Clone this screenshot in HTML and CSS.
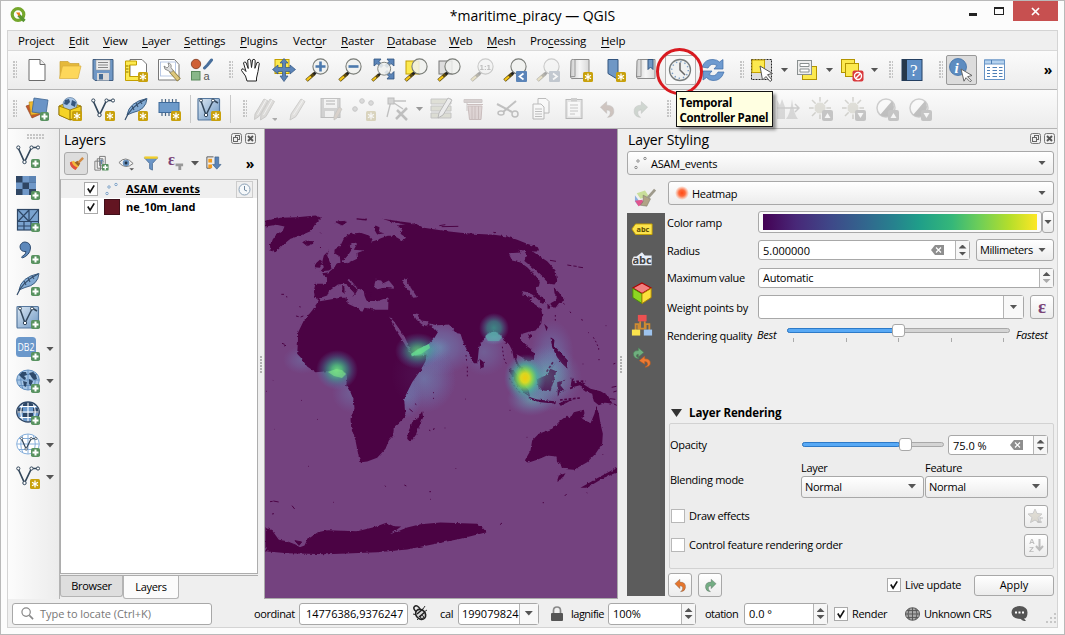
FILE: index.html
```html
<!DOCTYPE html>
<html lang="en">
<head>
<meta charset="utf-8">
<title>*maritime_piracy — QGIS</title>
<link rel="stylesheet" href="styles.css">
</head>
<body>
<svg class="defs" width="0" height="0">
<defs>
<linearGradient id="gBlue" x1="0" y1="0" x2="1" y2="1"><stop offset="0" stop-color="#dce8f3"/><stop offset="1" stop-color="#6d97c4"/></linearGradient>
<linearGradient id="gPaper" x1="0" y1="0" x2="1" y2="0"><stop offset="0" stop-color="#cfcfcf"/><stop offset=".5" stop-color="#f6f6f6"/><stop offset="1" stop-color="#d8d8d8"/></linearGradient>
<radialGradient id="gHot"><stop offset="0" stop-color="#ff4a14"/><stop offset=".45" stop-color="#ff6a3c"/><stop offset="1" stop-color="#ff8050" stop-opacity="0"/></radialGradient>
<g id="plus"><rect x="15" y="15" width="9" height="9" rx="1.8" fill="#589260"/><path d="M19.5 16.5v6M16.5 19.5h6" stroke="#fff" stroke-width="2"/></g>
<g id="star"><rect x="14" y="14" width="10" height="10" rx="1.5" fill="#c8a10c"/><path d="M19 15.5v7M16 17.2l6 3.6M16 20.8l6-3.6" stroke="#fff" stroke-width="1.3"/></g>
<g id="lens"><path d="M9.500 15.500L1.500 22.500" stroke="#5c4a10" stroke-width="3.600"/><path d="M6 18.500L1.800 22.200" stroke="#f5c518" stroke-width="2.200"/><path d="M11 14L8.500 16.500" stroke="#222" stroke-width="2.600"/><circle cx="15.500" cy="8.500" r="7.600" fill="#f0f1ee" fill-opacity=".85" stroke="#7a7d78" stroke-width="1.100"/></g>
<g id="vee"><path d="M2 3.500L8.500 18L15.500 3.500H22" fill="none" stroke="#33475b" stroke-width="1.700"/><g fill="#fff" stroke="#33475b"><circle cx="2.300" cy="3.500" r="1.600"/><circle cx="15.500" cy="3.500" r="1.600"/><circle cx="22" cy="3.500" r="1.600"/><circle cx="8.500" cy="18" r="1.700"/></g></g>
<g id="globe"><ellipse cx="12" cy="11" rx="11.300" ry="10"/><path d="M1 11h22M3 5.500h18M3 16.500h18M12 1v20M7 2Q2.500 11 7 20M17 2Q21.500 11 17 20" fill="none"/></g>

<symbol id="i-new" viewBox="0 0 24 24"><path d="M4 1.500h11l5 5v16H4z" fill="#fff" stroke="#6b6b6b"/><path d="M15 1.500v5h5" fill="#eee" stroke="#6b6b6b"/></symbol>
<symbol id="i-open" viewBox="0 0 24 24"><path d="M2 20V3.500h8l2 2h9V9" fill="#e5b93a" stroke="#c9a032" stroke-width=".7"/><path d="M1.500 20.500L4.500 8H23l-3 12.500z" fill="#fdd75a" stroke="#d8ad3c" stroke-width=".7"/></symbol>
<symbol id="i-save" viewBox="0 0 24 24"><path d="M2 1.500h20v21H4l-2-2z" fill="#6f97c5" stroke="#3f5c80"/><rect x="5" y="2" width="14" height="10" fill="#eee" stroke="#999" stroke-width=".5"/><path d="M7 4.500h10M7 7h10M7 9.500h10" stroke="#888"/><rect x="6" y="15" width="12" height="7.500" fill="#d8d8d8"/><rect x="8" y="16" width="4" height="5.500" fill="#456b95"/></symbol>
<symbol id="i-layout" viewBox="0 0 24 24"><path d="M6 1.500h12l4.500 4.500v16H6z" fill="#fff" stroke="#777"/><path d="M1.500 3h11v4h-7v11.500h13v4h-17z" fill="#fce94f" stroke="#c4a000"/><path d="M2 8h2.500M2 11h2.500M2 14h2.500" stroke="#8a7000"/><use href="#star"/></symbol>
<symbol id="i-lmgr" viewBox="0 0 24 24"><path d="M1.500 1.500h16l4.500 5v15.500H1.500z" fill="#fff" stroke="#777"/><rect x="3.500" y="4" width="15" height="14" fill="#fff" stroke="#a9bbdf" stroke-width=".8"/><path d="M14 13l8 9" stroke="#8a7a40" stroke-width="4.800"/><path d="M14 13l7.500 8.500" stroke="#dcc67c" stroke-width="3.400"/><path d="M7 8q0 4 4 4.500l3 2 2-2-2-3q1-4-3-4.500l1 3-2 2z" fill="#ddd" stroke="#777" stroke-width=".8"/></symbol>
<symbol id="i-style" viewBox="0 0 24 24"><circle cx="6" cy="6" r="4.700" fill="#cf6035" stroke="#7e3a1f" stroke-width=".8"/><rect x="1.500" y="13.500" width="8.500" height="8.500" fill="#89b789" stroke="#5a8a5c"/><path d="M14.500 10l3-3 4-5" stroke="#486f9c" stroke-width="3" stroke-linecap="round"/><text x="13.500" y="22" class="glyph-a">a</text></symbol>
<symbol id="i-hand" viewBox="0 0 24 24"><path d="M8 23l-1.500-5L2.500 12.500q0-2.500 2-1.500L7 13.500 4.500 5q.8-2 2.500-.5l2.200 6L8.700 2q1.500-1.800 3 0l.8 7.500L13.600 1.800q1.500-1.300 2.600.5l-.3 8L18 4.500q1.800-.8 2.300 1L19 13.500 17.500 20v3z" fill="#fff" stroke="#222"/></symbol>
<symbol id="i-pan" viewBox="0 0 24 24"><rect x="3" y="1.500" width="14" height="14" fill="#fce94f" stroke="#c4a000"/><path d="M12 .5l4 4.500h-2.500v4.500H18V7l5.500 4.500L18 16v-2.500h-4.500V18H16l-4 5.500L8 18h2.500v-4.500H6V16L.5 11.500 6 7v2.500h4.500V5H8z" fill="#5b84b8" stroke="#31547f" stroke-width=".7"/></symbol>
<symbol id="i-zin" viewBox="0 0 24 24"><use href="#lens"/><path d="M15.500 3.500v10M10.500 8.500h10" stroke="#4c79ad" stroke-width="2.600"/></symbol>
<symbol id="i-zout" viewBox="0 0 24 24"><use href="#lens"/><path d="M10.500 8.500h10" stroke="#4c79ad" stroke-width="2.600"/></symbol>
<symbol id="i-zfull" viewBox="0 0 24 24"><path d="M3 1h7L8 3.500l4 4-2 2-4-4L3 8zM23 1h-7l2 2.500-4 4 2 2 4-4L23 8zM23 21h-7l2-2.500-4-4 2-2 4 4 3-3z" fill="#5b84b8" stroke="#31547f" stroke-width=".8"/><g transform="translate(0 3.500) scale(.85)"><use href="#lens"/></g></symbol>
<symbol id="i-zsel" viewBox="0 0 24 24"><rect x="2" y="3" width="13" height="13" fill="#fce94f" stroke="#c4a000"/><use href="#lens"/></symbol>
<symbol id="i-zlay" viewBox="0 0 24 24"><rect x="2" y="3" width="13" height="13" fill="#ddd" stroke="#777"/><use href="#lens"/></symbol>
<symbol id="i-z11" viewBox="0 0 24 24"><use href="#lens"/><text x="9.500" y="12" class="glyph-11">1:1</text></symbol>
<symbol id="i-zprev" viewBox="0 0 24 24"><use href="#lens"/><rect x="13" y="13" width="11" height="11" rx="1" fill="#5b84b8"/><path d="M20.500 15.500l-4 3 4 3" fill="none" stroke="#fff" stroke-width="1.700"/></symbol>
<symbol id="i-znext" viewBox="0 0 24 24"><use href="#lens"/><rect x="13" y="13" width="11" height="11" rx="1" fill="#5b84b8"/><path d="M17 15.500l4 3-4 3" fill="none" stroke="#fff" stroke-width="1.700"/></symbol>
<symbol id="i-map" viewBox="0 0 24 24"><path d="M2 2.500q1-1.500 2.500-1H20v19H5q-3 1-3.500-1.500z" fill="url(#gPaper)" stroke="#8b8b8b"/><path d="M6 1.500v17H2" fill="none" stroke="#999"/></symbol>
<symbol id="i-mapnew" viewBox="0 0 24 24"><use href="#i-map" width="24" height="24"/><use href="#star"/></symbol>
<symbol id="i-bmnew" viewBox="0 0 24 24"><path d="M6 1.500h10v20l-10-6z" fill="#6f97c5" stroke="#33557f"/><use href="#star"/></symbol>
<symbol id="i-bmshow" viewBox="0 0 24 24"><use href="#i-map" width="24" height="24"/><path d="M13 1.500h5v10l-2.500-2.500L13 11.500z" fill="#6f97c5" stroke="#33557f"/></symbol>
<symbol id="i-clock" viewBox="0 0 24 24"><circle cx="12" cy="12" r="10.500" fill="#f0f2f1" stroke="#777c7c" stroke-width="1.300"/><circle cx="12" cy="12" r="8.300" fill="none" stroke="#7c9fc6" stroke-width="1.500" stroke-dasharray="1.300 3.046"/><path d="M12 4.500V12l5 5" fill="none" stroke="#666" stroke-width="1.500"/></symbol>
<symbol id="i-refresh" viewBox="0 0 24 24"><path d="M1 9Q4 1 12 1.500q4 0 6.500 2.500L22 1.500V11h-9l3-3.500Q10 4 7 10zM23 14q-3 9-11 8.500-4 0-6.500-3L2 22v-9h9l-3 3.500q6 3.500 9-2.500z" fill="#6f9bd0" stroke="#3c6ca7" stroke-width=".7"/></symbol>
<symbol id="i-select" viewBox="0 0 24 24"><rect x="1.500" y="1.500" width="20" height="20" fill="#ddd" stroke="#222" stroke-dasharray="2 1"/><rect x="2" y="2" width="12.500" height="12.500" fill="#fce94f" stroke="#c4a000"/><path d="M10 8l12.500 7.500-5 1.200L22 22l-2 1.500-4-5L12.500 22z" fill="#fff" stroke="#555"/></symbol>
<symbol id="i-selform" viewBox="0 0 24 24"><rect x="7.500" y="8.500" width="14" height="13" fill="#fce94f" stroke="#b39400"/><rect x="2.500" y="2.500" width="14" height="14" fill="#eee" stroke="#8a9090"/><path d="M5 5.500h9v3H5zM5 11h9v3H5z" fill="#fff" stroke="#8a9090"/></symbol>
<symbol id="i-desel" viewBox="0 0 24 24"><rect x="1.500" y="1.500" width="13" height="13" fill="#fce94f" stroke="#b39400"/><rect x="5.500" y="5.500" width="13" height="13" fill="#fce94f" stroke="#b39400"/><rect x="12.500" y="12.500" width="11" height="11" rx="2" fill="#d9383c"/><circle cx="18" cy="18" r="3.500" fill="none" stroke="#fff" stroke-width="1.400"/><path d="M15.500 20.500l5-5" stroke="#fff" stroke-width="1.400"/></symbol>
<symbol id="i-help" viewBox="0 0 24 24"><rect x="2" y="1.500" width="20" height="21" fill="#5f8fc6" stroke="#233f62"/><rect x="2" y="1.500" width="5" height="21" fill="#26384b"/><text x="10" y="18" class="glyph-q">?</text></symbol>
<symbol id="i-ident" viewBox="0 0 24 24"><circle cx="9" cy="9" r="8.500" fill="#5d8cc0" stroke="#3f6fa6" stroke-width=".8"/><text x="5.500" y="14.500" class="glyph-i">i</text><path d="M12 11l11 6.500-4.500 1.200 4 4-1.500 1-4-4-2 3.500z" fill="#fff" stroke="#666"/></symbol>
<symbol id="i-table" viewBox="0 0 24 24"><rect x="2.500" y="2" width="20" height="19.500" fill="#fff" stroke="#6794c6"/><path d="M2.500 2h20v4h-20z" fill="#b5d2ee" stroke="#6794c6"/><path d="M5 9.500h3M5 12.500h3M5 15.500h3M5 18.500h3M10.500 9.500H15M10.500 12.500H15M10.500 15.500H15M10.500 18.500H15M17 9.500h3.500M17 12.500h3.500M17 15.500h3.500M17 18.500h3.500M9.500 2v4" stroke="#4e7fb5"/></symbol>

<symbol id="i-dsm" viewBox="0 0 24 24"><path d="M1 9l9-3 6 11-9 4z" fill="#c25a2c" stroke="#8a3c1a" stroke-width=".6"/><path d="M4 5l12-1 1 12-11 2z" fill="#f0b92e" stroke="#b88914" stroke-width=".6"/><path d="M9 1l14 2-2 14-14-2z" fill="#6b94c6" stroke="#3f6692" stroke-width=".8"/><use href="#plus"/></symbol>
<symbol id="i-gpkg" viewBox="0 0 24 24"><path d="M1 9l9-4 13 4v9l-10 5-12-5z" fill="#f0c419" stroke="#8c6d00" stroke-width=".8"/><circle cx="12" cy="7.500" r="7" fill="#a9c6e6" stroke="#4a6b90" stroke-width=".6"/><path d="M7 3l4-1 1 3-3 3-3-1zM14 3l4 2-1 5-4-2z" fill="#34557d"/><path d="M1 9l11 4 11-4v9l-11 5-11-5z" fill="#f5d327" stroke="#8c6d00" stroke-width=".8"/><path d="M12 13v10" stroke="#8c6d00"/><use href="#star"/></symbol>
<symbol id="i-vnew" viewBox="0 0 24 24"><use href="#vee"/><use href="#star"/></symbol>
<symbol id="i-vadd" viewBox="0 0 24 24"><use href="#vee"/><use href="#plus"/></symbol>
<symbol id="i-quill" viewBox="0 0 24 24"><path d="M3 18Q5 5 23 1.500 22 13 9 15.500L3 18z" fill="#82aad3" stroke="#36587d" stroke-width=".9"/><path d="M1 23Q6 10 22 2M8 9l2 4M12 6l2 4M16 4l2 3" fill="none" stroke="#334d6b" stroke-width="1.100"/></symbol>
<symbol id="i-spnew" viewBox="0 0 24 24"><use href="#i-quill" width="24" height="24"/><use href="#star"/></symbol>
<symbol id="i-spadd" viewBox="0 0 24 24"><use href="#i-quill" width="24" height="24"/><use href="#plus"/></symbol>
<symbol id="i-chip" viewBox="0 0 24 24"><path d="M5 2v17M8.500 2v17M12 2v17M15.500 2v17M19 2v17" stroke="#4a6684" stroke-width="1.200"/><rect x="2" y="5.500" width="20" height="10" fill="#6d9aca" stroke="#3f6a9a"/><use href="#star"/></symbol>
<symbol id="i-virt" viewBox="0 0 24 24"><rect x="1" y="1.500" width="21.500" height="21.500" rx="1" fill="url(#gBlue)" stroke="#56789e" stroke-width="1.200"/><path d="M4 4l5 14 7-14M16 3l5 3" fill="none" stroke="#33475b" stroke-width="1.500"/><g fill="#fff" stroke="#33475b"><circle cx="4" cy="3.500" r="1.500"/><circle cx="9" cy="18" r="1.700"/><circle cx="16" cy="3.500" r="1.500"/></g></symbol>
<symbol id="i-vrnew" viewBox="0 0 24 24"><use href="#i-virt" width="24" height="24"/><use href="#star"/></symbol>
<symbol id="i-vradd" viewBox="0 0 24 24"><use href="#i-virt" width="24" height="24"/><use href="#plus"/></symbol>
<symbol id="i-pencil" viewBox="0 0 24 24"><path d="M5 17L15 2l4 2.500L10 19.500l-6 3.500z" fill="#c9c2b2" stroke="#8a857a"/><path d="M17 3L7.500 18" stroke="#eee"/></symbol>
<symbol id="i-pencils" viewBox="0 0 24 24"><path d="M2 17L11 2l4 2-8.500 15-5 3.500z" fill="#b8b0a0" stroke="#8a857a"/><path d="M8 17L17 2l4.500 2.500L13 19.500 7.500 23z" fill="#b8b0a0" stroke="#8a857a"/><path d="M13 3L4.500 18M19 3l-8.500 15" stroke="#eee"/><path d="M19 21h6l-3 3z" fill="#333"/></symbol>
<symbol id="i-saveed" viewBox="0 0 24 24"><rect x="2" y="1.500" width="19" height="19" fill="#999" stroke="#666"/><path d="M5 2h13v9H5zM6 14h9v6H6z" fill="#eee"/><path d="M7 4h9M7 7h9" stroke="#777" stroke-width="1.500"/><path d="M15 19l5-9 3 2-5 9-3 2z" fill="#c5936c" stroke="#776" stroke-width=".7"/></symbol>
<symbol id="i-points" viewBox="0 0 24 24"><g fill="#aaa" stroke="#777"><circle cx="3" cy="12" r="2.300"/><circle cx="10" cy="4" r="2.300"/><circle cx="19" cy="6" r="2.300"/></g><use href="#star"/></symbol>
<symbol id="i-vertex" viewBox="0 0 24 24"><path d="M2 20L6 4h15M6 4l12 8" fill="none" stroke="#666" stroke-width="1.300"/><rect x="3" y="1" width="6" height="6" fill="#999" stroke="#555"/><path d="M12 13l10 10M22 11L11 22" stroke="#666" stroke-width="2.500"/></symbol>
<symbol id="i-multi" viewBox="0 0 24 24"><path d="M1 2h20v5H1zM1 9h20v5H1zM1 16h20v5H1z" fill="#b9bb7c" stroke="#777"/><path d="M9 16L18 1l4 2L13 18l-5 3z" fill="#ddd" stroke="#555"/></symbol>
<symbol id="i-trash" viewBox="0 0 24 24"><path d="M1 2.500h18v3H1zM4 5v9" fill="#b78787" stroke="#977"/><path d="M5 9h14l-1 13.500H6.500zM9 9v13M12 9v13M15.500 9v13M4 7.500h16" fill="#d99999" stroke="#a55"/></symbol>
<symbol id="i-cut" viewBox="0 0 24 24"><path d="M1 7l15 8M20 4L7 15" stroke="#666" stroke-width="2"/><circle cx="19" cy="17" r="3" fill="none" stroke="#666" stroke-width="1.500"/><ellipse cx="5" cy="16" rx="3" ry="2" fill="none" stroke="#666" stroke-width="1.500"/></symbol>
<symbol id="i-copy" viewBox="0 0 24 24"><path d="M9 1.500h8l3 3V16H9z" fill="#fff" stroke="#555"/><path d="M4 7h8l3 3v12H4z" fill="#fff" stroke="#555"/><path d="M6 12h7M6 14.500h7M6 17h7M6 19.500h7" stroke="#666"/></symbol>
<symbol id="i-paste" viewBox="0 0 24 24"><rect x="4" y="2.500" width="16" height="19" fill="#ccc" stroke="#555"/><rect x="6" y="5" width="12" height="14.500" fill="#fff"/><rect x="9" y="1" width="6" height="3.500" fill="#888"/><path d="M8 8h8M8 11h8M8 14h8M8 17h5" stroke="#777"/></symbol>
<symbol id="i-undo" viewBox="0 0 24 24"><path d="M3 9l8-7v4.500q10 0 9 9-1 6-8 6.500 4-3 3.500-6.500-.5-3-4.500-3V17z" fill="currentColor" stroke="#555" stroke-width=".5"/></symbol>
<symbol id="i-redo" viewBox="0 0 24 24"><path d="M21 9l-8-7v4.500q-10 0-9 9 1 6 8 6.500-4-3-3.500-6.500.5-3 4.500-3V17z" fill="currentColor" stroke="#555" stroke-width=".5"/></symbol>
<symbol id="i-stretch" viewBox="0 0 24 24"><path d="M1 22V3l3 5 2-6 3 8v12zM10 22Q14 18 16 2q2 16 6 20z" fill="#aaa"/><path d="M1 11h22M19 7l4 4-4 4" fill="none" stroke="#888" stroke-width="1.500"/></symbol>
<symbol id="i-sunup" viewBox="0 0 24 24"><path d="M11 0v22M0 11h22M3 3l16 16M19 3L3 19" stroke="#99947a" stroke-width="1.500"/><circle cx="11" cy="11" r="6" fill="#bdb88d" stroke="#eee"/><rect x="13" y="13" width="11" height="11" rx="2" fill="#777"/><path d="M15.500 21l3-5 3 5z" fill="#fff"/></symbol>
<symbol id="i-sundn" viewBox="0 0 24 24"><path d="M11 0v22M0 11h22M3 3l16 16M19 3L3 19" stroke="#99947a" stroke-width="1.500"/><circle cx="11" cy="11" r="6" fill="#bdb88d" stroke="#eee"/><rect x="13" y="13" width="11" height="11" rx="2" fill="#777"/><path d="M15.500 16l3 5 3-5z" fill="#fff"/></symbol>
<symbol id="i-conup" viewBox="0 0 24 24"><circle cx="11" cy="11" r="9" fill="#fff" stroke="#888" stroke-width="1.500"/><path d="M17 4L5 18q7 4 12-1 4-7 0-13z" fill="#666"/><rect x="13" y="13" width="11" height="11" rx="2" fill="#777"/><path d="M15.500 21l3-5 3 5z" fill="#fff"/></symbol>
<symbol id="i-condn" viewBox="0 0 24 24"><circle cx="11" cy="11" r="9" fill="#fff" stroke="#888" stroke-width="1.500"/><path d="M17 4L5 18q7 4 12-1 4-7 0-13z" fill="#666"/><rect x="13" y="13" width="11" height="11" rx="2" fill="#777"/><path d="M15.500 16l3 5 3-5z" fill="#fff"/></symbol>

<symbol id="i-raster" viewBox="0 0 24 24"><rect width="20" height="19" fill="#7098c8"/><path d="M0 0h6.500v6.500H0zM13 0h7v6.500h-7zM6.500 6.500H13V13H6.500zM0 13h6.500v6H0zM13 13h7v6h-7z" fill="#2f4664"/><path d="M13 0h7v6.500h-7z" fill="#5c84b4"/><use href="#plus"/></symbol>
<symbol id="i-mesh" viewBox="0 0 24 24"><rect x="1.500" y="1.500" width="21" height="20.500" fill="#7aa3cf" stroke="#2e4766" stroke-width="1.200"/><path d="M13 1.500v12M1.500 13.500h21M2 2l11 11.500M13 2L2 13.500M22 2L13 13.500M8 13.500V22M15 13.500V22M1.500 18H15" stroke="#2e4766" stroke-width="1.200"/><use href="#plus"/></symbol>
<symbol id="i-comma" viewBox="0 0 24 24"><path d="M4 7a5 5 0 0 1 5-5q5.500.5 5.500 6-.5 7-8 10l-1-1q5-3 4.500-5.500Q4.500 12 4 7z" fill="#5d88bb" stroke="#2f4d72"/><use href="#plus"/></symbol>
<symbol id="i-db2" viewBox="0 0 24 24"><rect y="0" width="20" height="20" rx="3.500" fill="#6b98cb"/><text x="1.500" y="14" class="glyph-db" textLength="17" lengthAdjust="spacingAndGlyphs">DB2</text><use href="#plus"/></symbol>
<symbol id="i-wms" viewBox="0 0 24 24"><g fill="#a6c6e6" stroke="#6490bf"><use href="#globe"/></g><path d="M3 6l3-3 4 0 1 3-3 1 2 2-1 2-2-1zM7 12l4 1-1 5-2-1zM13 4l4-1 3 3 1 4-3 1-2-2zM13 10l4 2-2 5-2-2z" fill="#2e4a6b"/><use href="#plus"/></symbol>
<symbol id="i-wcs" viewBox="0 0 24 24"><g fill="#6c9acc" stroke="none"><use href="#globe"/></g><path d="M1 7h6v5H1zM17 7h6v5h-6zM7 12h10v5H7zM7 1.500h10V6H7z" fill="#2e4766"/><g fill="none" stroke="#fff" stroke-width="1.100"><use href="#globe"/></g><ellipse cx="12" cy="11" rx="11.300" ry="10" fill="none" stroke="#2e4766" stroke-width="1.300"/><use href="#plus"/></symbol>
<symbol id="i-wfs" viewBox="0 0 24 24"><g fill="#fff" stroke="#87b0dc"><use href="#globe"/></g><g transform="translate(4 3) scale(.72)"><use href="#vee"/></g><use href="#plus"/></symbol>

<symbol id="i-brush" viewBox="0 0 18 18"><path d="M2 8l4-2 6 5-4 5q-5-2-6-8z" fill="#f4b93c"/><path d="M2 8q0 5 6 8l2-3q-5-1-6-6z" fill="#df5042"/><path d="M7 8l3-2 3 3-2 3z" fill="#9b6428"/><path d="M11 8l5-5" stroke="#d28b43" stroke-width="2.500"/></symbol>
<symbol id="i-group" viewBox="0 0 18 18"><path d="M7 1.500h6v10H7zM4.500 4h6v10h-6zM2 6.500h6v9.500H2z" fill="#f5f5f5" stroke="#777"/><path d="M9 10V5l-2 2m2-2l2 2" stroke="#5a7fa8" fill="none"/><rect x="9.500" y="9.500" width="7" height="7" rx="1" fill="#589260"/><path d="M13 10.500v5M10.500 13h5" stroke="#fff" stroke-width="1.500"/></symbol>
<symbol id="i-eye" viewBox="0 0 18 18"><path d="M1 8q7-8 15 1-8 7-15-1z" fill="#f3f3f3" stroke="#777"/><circle cx="8.500" cy="8.500" r="3.500" fill="#6790bd"/><circle cx="8.500" cy="8.500" r="1.500" fill="#234"/><path d="M12 14h5l-2.500 2.500z" fill="#555"/></symbol>
<symbol id="i-filter" viewBox="0 0 18 18"><path d="M1.500 3h14l-5.500 6v7l-3-1.500V9z" fill="#6b95c6" stroke="#40658f" stroke-width=".8"/><path d="M1.500 1.500h14V4h-14z" fill="#f2cf2c"/></symbol>
<symbol id="i-efil" viewBox="0 0 18 18"><text x="0" y="11" class="glyph-e">ε</text><path d="M8 9h8v3h-2v4h-3v-4H8z" fill="#999"/></symbol>
<symbol id="i-expand" viewBox="0 0 18 18"><path d="M2 2v12M2 2h7M2 14h4" stroke="#555" fill="none"/><rect x="3.500" y="4" width="4" height="4" fill="#f39c1f"/><rect x="3.500" y="10" width="4" height="4" fill="#f39c1f"/><path d="M10.500 2h4v8H17l-4.500 5-4.500-5h2.500z" fill="#5b84b8" stroke="#36587f" stroke-width=".6"/></symbol>
<symbol id="i-dots" viewBox="0 0 14 14"><g fill="#fff" stroke="currentColor"><circle cx="2" cy="11.500" r="1.200"/><circle cx="4" cy="5" r="1.200"/><circle cx="11" cy="2.500" r="1.200"/></g></symbol>
<symbol id="i-float" viewBox="0 0 11 11"><rect x=".5" y=".5" width="10" height="10" rx="2" fill="none" stroke="#777"/><rect x="4.500" y="2.500" width="4" height="4" fill="none" stroke="#666"/><rect x="2.500" y="4.500" width="4" height="4" fill="#eee" stroke="#666"/></symbol>
<symbol id="i-close" viewBox="0 0 11 11"><rect x=".5" y=".5" width="10" height="10" rx="2" fill="none" stroke="#777"/><path d="M3 3l5 5M8 3L3 8" stroke="#555" stroke-width="1.900"/></symbol>
<symbol id="i-tick" viewBox="0 0 13 13"><path d="M3 6l2.500 4L10 2.500" fill="none" stroke="#111" stroke-width="1.800"/></symbol>
<symbol id="i-clear" viewBox="0 0 13 10"><path d="M0 5l4-5h9v10H4z" fill="#8e8e8e"/><path d="M5 2.500l5 5M10 2.500l-5 5" stroke="#fff" stroke-width="1.200"/></symbol>

<symbol id="i-sym" viewBox="0 0 24 24"><path d="M3 8l9-3 4 6-9 3z" fill="#c9de9a"/><path d="M1 10l5 7-1 5-4-5z" fill="#8caedf"/><path d="M1 16l8-1 2 4-6 3z" fill="#e0568e"/><path d="M10 10l8 4-4 8-7-1 3-4z" fill="#b0a386" stroke="#776" stroke-width=".6"/><path d="M15 13l8-9" stroke="#9e9a8c" stroke-width="3"/></symbol>
<symbol id="i-label" viewBox="0 0 24 24"><path d="M1 12l4-5.500h18v11.500H5z" fill="#fbe34d" stroke="#c4a000"/><text x="6" y="15.500" class="glyph-abc" textLength="14">abc</text></symbol>
<symbol id="i-mask" viewBox="0 0 24 24"><path d="M3 7H6L12 2.500 15 6H22.500V16.500H2Q-.5 12 3 7z" fill="#e8eef8"/><text x="1.500" y="15" class="glyph-mask" textLength="21">abc</text></symbol>
<symbol id="i-cube" viewBox="0 0 24 24"><path d="M12 1l10 5.500-10 6-10-6z" fill="#f38080" stroke="#b00000" stroke-width="1.200"/><path d="M2 7l10 6v10.500L2 17z" fill="#8ed622" stroke="#4b8a06"/><path d="M22 7l-10 6v10.500L22 17z" fill="#fce03c" stroke="#ae8800"/></symbol>
<symbol id="i-diag" viewBox="0 0 24 24"><path d="M10 8v7M15 8v7M5 18v-7h3v5h8v-5h4v7" stroke="#cf8b32" stroke-width="2" fill="none"/><rect x="7.500" y="1" width="9.500" height="7" fill="#eb5151"/><rect x="1" y="17" width="9" height="6.500" fill="#fbe34d"/><rect x="14" y="17" width="9" height="6.500" fill="#9dc3ee"/></symbol>
<symbol id="i-hist" viewBox="0 0 24 24"><path d="M14 7L8 2v3Q1 5 3 11q2 4 6 2-4-1-3-3 0-1 2-1v3z" fill="#6fae7e" stroke="#497c55" stroke-width=".6"/><path d="M9 16l6-5v3q7 0 6 6-2 4-6 3 4-2 3-4 0-2-3-2v3z" fill="#ee7a32" stroke="#b25a20" stroke-width=".6"/></symbol>
<symbol id="i-lock" viewBox="0 0 14 16"><path d="M3.500 7V4.500q0-3.500 3.500-3.500t3.500 3.500V7" fill="none" stroke="#888" stroke-width="1.700"/><rect x="1" y="7" width="12" height="8" rx="1" fill="#555"/></symbol>
</defs>
</svg>

<div class="window">
  <header class="titlebar">
    <svg class="logo" viewBox="0 0 16 16"><circle cx="8" cy="7.500" r="5.800" fill="none" stroke="#75a72c" stroke-width="3.200"/><path d="M8.500 8l6 6" stroke="#589632" stroke-width="3.200"/><path d="M6 5.500h4l-.5 4L8 8z" fill="#ee7913"/></svg>
    <div class="title">*maritime_piracy — QGIS</div>
    <div class="winctl"><span class="min"></span><span class="max"></span><span class="cls"><svg width="9" height="9" viewBox="0 0 9 9"><path d="M1 1l7 7M8 1L1 8" stroke="#fff" stroke-width="1.700"/></svg></span></div>
  </header>
  <div class="frame">
    <nav class="menubar">
      <span class="m1">Pro<u>j</u>ect</span><span class="m2"><u>E</u>dit</span><span class="m3"><u>V</u>iew</span><span class="m4"><u>L</u>ayer</span><span class="m5"><u>S</u>ettings</span><span class="m6"><u>P</u>lugins</span><span class="m7">Vect<u>o</u>r</span><span class="m8"><u>R</u>aster</span><span class="m9"><u>D</u>atabase</span><span class="m10"><u>W</u>eb</span><span class="m11"><u>M</u>esh</span><span class="m12">Pro<u>c</u>essing</span><span class="m13"><u>H</u>elp</span>
    </nav>
    <div class="toolbar">
      <i class="grip first"></i>
      <b class="tb"><svg><use href="#i-new"/></svg></b><b class="tb"><svg><use href="#i-open"/></svg></b><b class="tb"><svg><use href="#i-save"/></svg></b><b class="tb"><svg><use href="#i-layout"/></svg></b><b class="tb"><svg><use href="#i-lmgr"/></svg></b><b class="tb"><svg><use href="#i-style"/></svg></b>
      <i class="grip"></i>
      <b class="tb"><svg><use href="#i-hand"/></svg></b><b class="tb"><svg><use href="#i-pan"/></svg></b><b class="tb"><svg><use href="#i-zin"/></svg></b><b class="tb"><svg><use href="#i-zout"/></svg></b><b class="tb"><svg><use href="#i-zfull"/></svg></b><b class="tb"><svg><use href="#i-zsel"/></svg></b><b class="tb"><svg><use href="#i-zlay"/></svg></b><b class="tb off"><svg><use href="#i-z11"/></svg></b><b class="tb"><svg><use href="#i-zprev"/></svg></b><b class="tb off"><svg><use href="#i-znext"/></svg></b><b class="tb"><svg><use href="#i-mapnew"/></svg></b><b class="tb"><svg><use href="#i-bmnew"/></svg></b><b class="tb"><svg><use href="#i-bmshow"/></svg></b>
      <b class="tb hover"><svg><use href="#i-clock"/></svg><i class="ring"></i><span class="tip">Temporal<br>Controller Panel</span></b>
      <b class="tb"><svg><use href="#i-refresh"/></svg></b>
      <i class="grip"></i>
      <b class="tb"><svg><use href="#i-select"/></svg></b><i class="drop"></i><b class="tb"><svg><use href="#i-selform"/></svg></b><i class="drop"></i><b class="tb"><svg><use href="#i-desel"/></svg></b><i class="drop"></i>
      <i class="grip near"></i>
      <b class="tb"><svg><use href="#i-help"/></svg></b>
      <i class="grip"></i>
      <b class="tb pressed"><svg><use href="#i-ident"/></svg></b><b class="tb"><svg><use href="#i-table"/></svg></b>
      <span class="more">»</span>
    </div>
    <div class="toolbar second">
      <i class="grip first"></i>
      <b class="tb"><svg><use href="#i-dsm"/></svg></b><b class="tb"><svg><use href="#i-gpkg"/></svg></b><b class="tb"><svg><use href="#i-vnew"/></svg></b><b class="tb"><svg><use href="#i-spnew"/></svg></b><b class="tb"><svg><use href="#i-chip"/></svg></b>
      <i class="sep"></i>
      <b class="tb"><svg><use href="#i-vrnew"/></svg></b>
      <i class="sep"></i><i class="grip"></i>
      <b class="tb off"><svg><use href="#i-pencils"/></svg></b><b class="tb off"><svg><use href="#i-pencil"/></svg></b><b class="tb off"><svg><use href="#i-saveed"/></svg></b><b class="tb off"><svg><use href="#i-points"/></svg></b><b class="tb off"><svg><use href="#i-vertex"/></svg></b><i class="drop"></i>
      <b class="tb off"><svg><use href="#i-multi"/></svg></b><b class="tb off"><svg><use href="#i-trash"/></svg></b><b class="tb off"><svg><use href="#i-cut"/></svg></b><b class="tb off"><svg><use href="#i-copy"/></svg></b><b class="tb off"><svg><use href="#i-paste"/></svg></b><b class="tb off brown"><svg class="md"><use href="#i-undo"/></svg></b><b class="tb off sage"><svg class="md"><use href="#i-redo"/></svg></b>
      <i class="grip"></i>
      <b class="tb off away"><svg><use href="#i-stretch"/></svg></b><b class="tb off"><svg><use href="#i-sunup"/></svg></b><b class="tb off"><svg><use href="#i-sundn"/></svg></b><b class="tb off"><svg><use href="#i-conup"/></svg></b><b class="tb off"><svg><use href="#i-condn"/></svg></b>
    </div>

    <main class="main">
      <aside class="sidebar">
        <i class="hgrip"></i>
        <div><svg><use href="#i-vadd"/></svg></div>
        <div><svg><use href="#i-raster"/></svg></div>
        <div><svg><use href="#i-mesh"/></svg></div>
        <div><svg><use href="#i-comma"/></svg></div>
        <div><svg><use href="#i-spadd"/></svg></div>
        <div><svg><use href="#i-vradd"/></svg></div>
        <div><svg><use href="#i-db2"/></svg><i class="arrow"></i></div>
        <div><svg><use href="#i-wms"/></svg><i class="arrow"></i></div>
        <div><svg><use href="#i-wcs"/></svg></div>
        <div><svg><use href="#i-wfs"/></svg><i class="arrow"></i></div>
        <div><svg><use href="#i-vnew"/></svg><i class="arrow"></i></div>
      </aside>

      <section class="layers">
        <div class="dockhead"><span>Layers</span><svg><use href="#i-float"/></svg><svg><use href="#i-close"/></svg></div>
        <div class="ltools">
          <b class="lt on"><svg><use href="#i-brush"/></svg></b><b class="lt"><svg><use href="#i-group"/></svg></b><b class="lt"><svg><use href="#i-eye"/></svg></b><b class="lt"><svg><use href="#i-filter"/></svg></b><b class="lt"><svg><use href="#i-efil"/></svg></b><i class="arrow"></i><b class="lt"><svg><use href="#i-expand"/></svg></b><span class="more">»</span>
        </div>
        <div class="tree">
          <div class="node sel"><i class="check"><svg><use href="#i-tick"/></svg></i><svg class="sym"><use href="#i-dots"/></svg><span class="nm"><u>ASAM_events</u></span><i class="tclock"><svg viewBox="0 0 13 13"><circle cx="6.500" cy="6.500" r="5.500" fill="#f5f8fa" stroke="#8aa0b5"/><path d="M6.500 3v4l2.500 1" fill="none" stroke="#7189a0"/></svg></i></div>
          <div class="node"><i class="check"><svg><use href="#i-tick"/></svg></i><i class="swatch"></i><span class="nm">ne_10m_land</span></div>
        </div>
        <div class="tabs"><span class="tab">Browser</span><span class="tab cur">Layers</span></div>
      </section>

      <div class="split s1"><i></i></div>

      <svg class="map" viewBox="265 129 352 469">
        <defs>
          <radialGradient id="hG"><stop offset="0" stop-color="#6fe080" stop-opacity=".95"/><stop offset=".25" stop-color="#4fc884" stop-opacity=".85"/><stop offset=".5" stop-color="#3f9c92" stop-opacity=".65"/><stop offset=".75" stop-color="#4a7fa0" stop-opacity=".32"/><stop offset="1" stop-color="#5f70a8" stop-opacity="0"/></radialGradient>
          <radialGradient id="hT"><stop offset="0" stop-color="#3c9c90" stop-opacity=".85"/><stop offset=".45" stop-color="#3f9090" stop-opacity=".7"/><stop offset="1" stop-color="#5f70a8" stop-opacity="0"/></radialGradient>
          <radialGradient id="hY"><stop offset="0" stop-color="#f0cc10"/><stop offset=".2" stop-color="#dcdc20" stop-opacity=".97"/><stop offset=".38" stop-color="#7ed858" stop-opacity=".9"/><stop offset=".58" stop-color="#46b59c" stop-opacity=".7"/><stop offset="1" stop-color="#5f70a8" stop-opacity="0"/></radialGradient>
          <radialGradient id="hB"><stop offset="0" stop-color="#6c86b4" stop-opacity=".7"/><stop offset=".5" stop-color="#6c80b4" stop-opacity=".4"/><stop offset="1" stop-color="#6c70b0" stop-opacity="0"/></radialGradient>
          <radialGradient id="hC"><stop offset="0" stop-color="#62c0b8" stop-opacity=".75"/><stop offset=".5" stop-color="#68a0b8" stop-opacity=".45"/><stop offset="1" stop-color="#6c80b0" stop-opacity="0"/></radialGradient>
          <filter id="rough" x="-.05" y="-.05" width="1.100" height="1.100" color-interpolation-filters="sRGB"><feTurbulence type="fractalNoise" baseFrequency=".3" numOctaves="2" seed="4"/><feDisplacementMap in="SourceGraphic" scale="3" xChannelSelector="R" yChannelSelector="G"/></filter>
        </defs>
        <rect x="265" y="129" width="352" height="469" fill="#74427f"/>
        <g>
          <ellipse cx="302" cy="360" rx="19" ry="14" fill="url(#hB)" opacity=".6"/>
          <ellipse cx="352" cy="393" rx="20" ry="20" fill="url(#hB)" opacity=".6"/>
          <ellipse cx="440" cy="347" rx="36" ry="28" fill="url(#hB)"/>
          <ellipse cx="424" cy="379" rx="32" ry="34" fill="url(#hB)" opacity=".9"/>
          <ellipse cx="407" cy="397" rx="15" ry="22" fill="url(#hB)" opacity=".8"/>
          <ellipse cx="484" cy="352" rx="24" ry="24" fill="url(#hB)" opacity=".6"/>
          <ellipse cx="552" cy="354" rx="22" ry="34" fill="url(#hB)" opacity=".8"/>
          <ellipse cx="546" cy="378" rx="36" ry="34" fill="url(#hC)" opacity=".8"/>
          <ellipse cx="531" cy="399" rx="24" ry="17" fill="url(#hC)" opacity=".8"/>
          <ellipse cx="430" cy="349" rx="22" ry="14" fill="url(#hC)" opacity=".7"/>
          <ellipse cx="494" cy="337" rx="13" ry="8" fill="url(#hC)"/>
        </g>
        <g filter="url(#rough)">
        <g transform="translate(260.500 200.500) scale(.33333)" fill="#4b0344">
          <path d="M15 60L60 52 110 50 165 45 182 52 165 70 150 92 120 105 90 115 65 135 45 155 30 150 28 130 45 105 68 88 72 78 48 73 15 78z"/>
          <path d="M125 125L135 120 158 122 158 130 140 137zM190 165L205 150 200 165 208 185 213 205 205 210 180 212 190 200 185 185zM165 190L178 178 185 190 178 202 163 200zM225 65L262 63 245 75zM285 58L320 54 318 60zM345 75L357 80 355 95 372 98 350 102 340 85zM365 55L420 63 460 68 440 72 400 66z"/>
          <path d="M163 290L160 270 165 250 196 250 200 235 186 222 186 218 205 215 222 200 228 190 240 187 238 168 222 158 222 148 240 135 250 115 262 103 280 98 300 97 325 105 336 116 332 124 345 120 365 112 382 106 400 106 425 120 437 112 420 100 426 90 412 75 440 70 470 72 490 82 520 86 560 92 600 97 640 100 700 103 740 108 770 118 800 130 832 140 836 150 812 150 838 168 860 182 885 210 890 240 882 252 866 250 848 232 820 205 790 180 800 165 790 150 772 148 782 156 744 158 755 180 780 186 800 200 825 225 838 245 835 258 825 260 830 280 848 292 856 306 845 310 832 296 815 282 800 275 788 272 785 285 805 287 812 292 808 297 818 308 842 325 846 345 842 370 825 390 800 395 786 400 780 415 790 430 810 445 822 460 820 475 805 486 795 480 785 470 770 462 768 478 775 492 792 508 806 530 798 532 783 515 772 495 760 475 755 450 745 430 735 430 722 405 705 393 692 392 680 400 660 430 655 445 652 475 650 488 640 488 625 460 610 430 600 400 590 398 578 385 565 372 530 374 500 368 480 372 490 378 504 370 520 382 532 395 522 412 505 430 480 445 453 460 453 468 480 465 498 462 495 482 480 510 455 545 440 575 431 595 433 625 435 645 425 658 400 680 398 705 385 720 375 745 350 772 320 783 302 785 295 770 285 720 272 680 270 655 282 625 280 600 270 575 257 555 260 530 255 515 240 522 225 508 200 512 165 515 140 498 120 470 110 460 112 430 113 395 130 360 155 330 175 300z"/>
          <path d="M485 632L488 650 475 680 465 705 450 725 440 715 443 695 455 665 470 655zM657 475L670 485 670 500 660 503zM745 505L760 510 785 545 805 570 808 588 792 578 772 555 752 525zM803 588L830 597 860 600 890 603 880 609 840 605 810 598zM895 608L940 594 920 606 900 616zM828 537L855 525 870 505 887 512 880 540 870 572 850 570 835 565zM890 545L912 538 898 552 912 570 900 568 892 590zM870 410L882 418 880 435 895 450 908 465 922 480 920 503 905 490 890 470 875 440zM870 508L890 480 876 500zM955 548L970 552 990 565 1020 572 1042 585 1056 610 1035 607 1015 614 1000 602 995 580 970 570zM793 780L810 750 815 720 835 700 875 685 900 660 920 645 928 655 940 635 970 628 972 638 965 655 990 668 1002 640 1007 616 1015 640 1020 670 1027 700 1025 730 1005 760 980 785 940 808 905 805 900 790 890 785 888 768 860 765 830 778 805 786zM895 825L915 818 905 835 890 841zM960 862L1010 833 1070 801 1070 817 1030 832 980 862zM880 262L895 275 912 300 895 308 885 322 872 318 870 308 885 300 890 290 882 278zM860 310L870 318 862 327zM851 370L862 380 858 392zM803 400L814 404 808 418zM962 543L975 550 930 562 934 530 944 548z"/>
          <path d="M15 980L35 990 55 1018 80 1022 105 1032 118 1040 132 1035 140 1018 172 995 200 989 290 992 340 980 378 967 400 977 422 978 388 1002 440 981 480 971 540 966 650 970 665 980 678 995 600 1015 500 1035 440 1047 350 1055 200 1061 80 1058 15 1052z"/>
          <g fill="#74427f"><path d="M340 262L345 238 362 240 368 248 385 240 400 258 400 265 372 262 350 266z"/><path d="M424 240L442 234 443 250 455 268 470 290 458 292 445 270 432 255z"/><path d="M272 150L268 135 282 125 290 130 280 148 310 150 288 158 290 175 262 188 245 184 262 165z"/><path d="M178 302L180 292 200 285 205 272 232 252 250 250 258 252 285 280 292 268 262 240 268 236 290 262 310 272 312 286 318 300 350 302 384 290 383 328 345 328 312 322 306 334 288 322 262 310 258 292 240 292z"/><path d="M386 348L400 362 432 408 447 442 452 460 442 448 425 418 405 388z"/><path d="M457 338L468 340 482 360 504 362 500 376 484 372 468 358z"/></g>
          <path d="M245 255L252 258 252 278 246 275zM258 252L272 262 285 280 275 290 282 278zM318 272L332 276 330 288 342 300 325 302 315 288z"/>
        </g></g>
        <g transform="translate(260 200) scale(.33333)" fill="#4b0344" stroke="#4b0344" stroke-width="3">
          <path d="M105 1022l20 4-8 10zM720 974l6-5" /><path d="M108 348l8 2M122 351l8-3M66 430l8 3M72 438l6-2M64 283l8 0M78 290l4 1M118 320l4 1M448 627l10 8M507 690l4 2M519 688l3-1M519 577l3 2M519 595l3 0M465 611l4 3M38 540l1 1M124 601l2 1M172 658l2 1M44 688h1M145 799h2M18 574h2M181 98l2 2M180 142l3 1M234 62l16 10M228 66l28-2M290 56l28 3M538 77l18-3M545 80l50-1M700 97l8 1M870 181l18 3M922 195l12 2M940 198l10 1M955 201l14 2M1055 562l14-3M1060 576l10-3M1050 596l16 2M1062 612l8 4M968 492l2 0M1015 479l4 0M1060 492l6-2M985 398l2 0M1037 377l2 0M965 357l2 5M616 597l2 1M554 684l2 0M520 688l4-2M586 807l2-2M749 631l2 0M800 712h2M1027 765l2-2M375 857l2 3M433 855l6 3M508 875l5 0M511 898l2 0M220 907h2M40 903l16 3M30 905l8-1M96 917l8 10M36 942l6-1M848 908l4 0M914 888l6-6M980 878l2 1" fill="none"/>
          <path d="M1000 412l8 14 8 18 0 8M888 315l-2 12M886 345l0 22M910 310l8 6M930 335l4 6M618 465l2 20M622 500l0 30M727 440l4 34 10 22M748 535l16 24 20 24" fill="none" stroke-dasharray="5 7"/>
          <path d="M860 515l20-30M936 545l40-2M900 600l60-6M930 565l14-4" fill="none" stroke-dasharray="8 5" stroke-width="5"/>
        </g>
        <g>
          <ellipse cx="425" cy="375" rx="34" ry="34" fill="url(#hB)" opacity=".15"/>
          <ellipse cx="546" cy="376" rx="30" ry="28" fill="url(#hC)" opacity=".5"/>
          <ellipse cx="337" cy="370" rx="21" ry="20" fill="url(#hG)"/>
          <ellipse cx="418" cy="351" rx="23" ry="18" fill="url(#hG)" opacity=".85"/>
          <path d="M411 354l7-5 11-5 1 4-9 6-9 2z" fill="#66e090" opacity=".7"/>
          <path d="M328 372l8-3 6 1 4 4-4 4-8-2z" fill="#80e488" opacity=".6"/>
          <ellipse cx="494" cy="328" rx="15" ry="15" fill="url(#hT)"/>
          <path d="M485 336l7-4 4 0 6 5-3 4h-11z" fill="#60b0b0" opacity=".6"/>
          <ellipse cx="525" cy="378" rx="21" ry="24" fill="url(#hY)"/>
        </g>
      </svg>

      <div class="split s2"><i></i></div>

      <section class="styling">
        <div class="dockhead"><span>Layer Styling</span><svg><use href="#i-float"/></svg><svg><use href="#i-close"/></svg></div>
        <div class="combo c-layer"><svg class="sym gray"><use href="#i-dots"/></svg><span>ASAM_events</span><i class="arrow"></i></div>
        <div class="sbody">
          <div class="stabs">
            <div class="stab top"><svg><use href="#i-sym"/></svg></div>
            <div class="stabdark"><svg><use href="#i-label"/></svg><svg><use href="#i-mask"/></svg><svg><use href="#i-cube"/></svg><svg><use href="#i-diag"/></svg><svg><use href="#i-hist"/></svg></div>
          </div>
          <div class="form">
            <div class="combo c-heat"><svg class="hot" viewBox="0 0 14 14"><circle cx="7" cy="7" r="7" fill="url(#gHot)"/></svg><span>Heatmap</span><i class="arrow"></i></div>
            <div class="row r1"><label>Color ramp</label><div class="ramp"><i></i></div><div class="btn rampbtn"><i class="arrow"></i></div></div>
            <div class="row r2"><label>Radius</label><div class="spin w212"><span>5.000000</span><svg class="clear"><use href="#i-clear"/></svg><i class="ud"></i></div><div class="combo mm"><span>Millimeters</span><i class="arrow"></i></div></div>
            <div class="row r3"><label>Maximum value</label><div class="spin w296"><span>Automatic</span><i class="ud low"></i></div></div>
            <div class="row r4"><label>Weight points by</label><div class="edit"><i class="dd"><i class="arrow"></i></i></div><div class="btn eps">ε</div></div>
            <div class="row r5"><label>Rendering quality</label><em class="best">Best</em><div class="slider quality"><i class="fill"></i><i class="knob"></i><div class="ticks"><i></i><i></i><i></i><i></i><i></i></div></div><em class="fast">Fastest</em></div>
            <div class="ghead"><i></i>Layer Rendering</div>
            <div class="group">
              <div class="grow g1"><label>Opacity</label><div class="slider opac"><i class="fill"></i><i class="knob"></i></div><div class="spin w100"><span>75.0 %</span><svg class="clear"><use href="#i-clear"/></svg><i class="ud"></i></div></div>
              <div class="grow g2"><label>Blending mode</label><div class="bl"><span>Layer</span><div class="combo"><span>Normal</span><i class="arrow"></i></div></div><div class="bl"><span>Feature</span><div class="combo"><span>Normal</span><i class="arrow"></i></div></div></div>
              <div class="grow g3"><i class="check"></i><span>Draw effects</span><div class="btn sq"><svg class="off" viewBox="0 0 16 16"><path d="M7 1l2 4.500 5 .5-4 3.500 1 5-4-2.500-4.500 2.500 1.500-5L0 6l5-.500z" fill="#b0a890" stroke="#777"/><path d="M12 9v6M12 10h3M9 14h5" stroke="#555"/></svg></div></div>
              <div class="grow g4"><i class="check"></i><span>Control feature rendering order</span><div class="btn sq"><svg class="off" viewBox="0 0 16 16"><text x="1" y="7" class="glyph-az">A</text><text x="1" y="15" class="glyph-az">Z</text><path d="M11.500 2v11M8 9l3.500 4L15 9" fill="none" stroke="#555" stroke-width="2"/></svg></div></div>
            </div>
            <div class="actions"><div class="btn act orange"><svg><use href="#i-undo"/></svg></div><div class="btn act green"><svg><use href="#i-redo"/></svg></div><i class="check"><svg><use href="#i-tick"/></svg></i><span>Live update</span><div class="btn apply">Apply</div></div>
          </div>
        </div>
      </section>
    </main>

    <footer class="status">
      <div class="locate"><svg viewBox="0 0 14 14"><circle cx="5.500" cy="5.500" r="4.500" fill="none" stroke="#888" stroke-width="1.300"/><path d="M9 9l4 4" stroke="#888" stroke-width="1.800"/></svg><span>Type to locate (Ctrl+K)</span></div>
      <span class="coord">oordinat</span>
      <div class="field f1">14776386,9376247</div>
      <svg class="bug" viewBox="0 0 16 17"><path d="M2 2l11 11M1 9l4 1M5 15l2-2M13 1l-2 3M15 5l-3 2" stroke="#333"/><ellipse cx="5" cy="4" rx="3.500" ry="2.500" transform="rotate(45 5 4)" fill="#eee" stroke="#222" stroke-width="1.500"/><ellipse cx="9" cy="9.500" rx="5.500" ry="4.500" transform="rotate(45 9 9)" fill="#ddd" stroke="#222" stroke-width="1.600"/><path d="M5 9l6-5M7 12l6-5" stroke="#222" stroke-width="1.500"/><circle cx="10" cy="12" r="1.500" fill="#fff" stroke="#222"/></svg>
      <span class="scale">cal</span>
      <div class="field f2">199079824<i class="dd"><i class="arrow"></i></i></div>
      <svg class="lock"><use href="#i-lock"/></svg>
      <span class="mag">lagnifie</span>
      <div class="spin f3"><span>100%</span><i class="ud"></i></div>
      <span class="rot">otation</span>
      <div class="spin f4"><span>0.0 °</span><i class="ud"></i></div>
      <i class="check"><svg><use href="#i-tick"/></svg></i><span class="render">Render</span>
      <svg class="crs" viewBox="0 0 24 22"><g fill="#aaa" stroke="#555" stroke-width="1.500"><use href="#globe"/></g></svg><span class="crst">Unknown CRS</span>
      <svg class="msg" viewBox="0 0 17 15"><path d="M8.500 0q8 .5 8 6.500t-3.500 6l2 2.500q-4 0-5-2Q1 13 .5 6.500.5.500 8.500 0z" fill="#555"/><path d="M4 6.500h2M7.500 6.500h2M11 6.500h2" stroke="#fff" stroke-width="1.800"/></svg>
      <svg class="size" viewBox="0 0 12 12"><path d="M10 1v2M10 5v2M10 9v2M6 5v2M6 9v2M2 9v2" stroke="#bbb" stroke-width="1.500"/></svg>
    </footer>
  </div>
</div>
</body>
</html>
```
FILE: styles.css
```css
* { box-sizing: border-box; }
body { margin: 0; width: 1065px; height: 635px; overflow: hidden; font: 11px/14px "Open Sans", "Noto Sans", sans-serif; letter-spacing: -0.3px; color: #000; }
i, b { font-style: normal; font-weight: normal; }
svg { display: block; flex: none; }
.defs { position: absolute; }
.window { width: 1065px; height: 635px; background: #fcfcfc; border: 1px solid #b9b9b9; padding: 0 6px 6px; display: flex; flex-direction: column; }
.titlebar { height: 29px; display: flex; align-items: flex-start; flex: none; }
.logo { width: 16px; height: 16px; margin: 6px 0 0 3px; }
.title { flex: 1; text-align: center; font-size: 14px; line-height: 18px; letter-spacing: -0.05px; margin-top: 6px; padding-left: 76px; }
.winctl { display: flex; width: 95px; height: 20px; flex: none; }
.min { width: 8px; height: 3px; background: #222; margin: 12px 0 0 6px; }
.max { width: 10px; height: 8px; border: 1px solid #222; border-top-width: 2px; margin: 6px 0 0 17px; }
.cls { width: 45px; height: 20px; background: #c75050; display: flex; align-items: center; justify-content: center; margin-left: auto; }
.frame { width: 1051px; height: 598px; border: 1px solid #d4d4d4; background: #efefef; display: flex; flex-direction: column; }
.menubar { height: 20px; flex: none; border-bottom: 1px solid #d9d9d9; display: flex; padding-left: 10px; font-size: 11.500px; line-height: 20px; letter-spacing: -0.15px; white-space: nowrap; }
.menubar u { text-underline-offset: 2px; }
.m1 { width: 51px; } .m2 { width: 34px; } .m3 { width: 39px; } .m4 { width: 42px; } .m5 { width: 56px; } .m6 { width: 53px; } .m7 { width: 48px; } .m8 { width: 46px; } .m9 { width: 62px; } .m10 { width: 38px; } .m11 { width: 43px; } .m12 { width: 71px; }

.toolbar { height: 39px; flex: none; display: flex; align-items: center; border-bottom: 1px solid #b4b4b4; background: linear-gradient(#fbfbfb, #ececec); }
.tb { width: 33px; height: 38px; flex: none; display: flex; align-items: center; justify-content: center; position: relative; }
.tb svg { width: 24px; height: 24px; }
.tb svg.md { width: 19px; height: 19px; }
.tb.off svg { opacity: .36; filter: saturate(.4); }
.brown { color: #b06a4a; } .sage { color: #7aaa82; }
.grip { width: 16px; height: 18px; flex: none; background: radial-gradient(circle at 1px 1px, #c4c4c4 .7px, transparent 1px) 0 0 / 3px 3px; background-clip: content-box; background-origin: content-box; padding: 0 2px 0 10px; }
.grip.first { width: 12.500px; padding: 0 3.500px 0 5px; }
.grip.near { width: 15px; padding: 0 3px 0 8px; }
.drop, .arrow { flex: none; width: 12px; height: 5px; background: #555; clip-path: polygon(2px 0, 10px 0, 6px 4.500px); }
.second .drop { background: #999; }
.sep { width: 7px; height: 28px; flex: none; background: linear-gradient(#c8c8c8, #c8c8c8) 4px 0 / 1px 28px no-repeat; }
.away { margin-left: 99px; }
.hover::before, .pressed::before { content: ""; position: absolute; inset: 4px 1px; border: 1px solid #b0b0b0; border-radius: 2px; }
.hover::before { background: #f8f8f8; }
.pressed::before { background: #dcdcdc; border-color: #999; }
.hover svg, .pressed svg { position: relative; }
.ring { position: absolute; left: -8px; top: -3px; width: 47px; height: 47px; border: 3px solid #d81a20; border-radius: 50%; z-index: 3; }
.tip { position: absolute; left: 12px; top: 40px; width: 97px; height: 36px; background: #ffffe1; border: 1px solid #111; box-shadow: 3px 3px 3px #0006; font-weight: bold; font-size: 11.500px; line-height: 15px; padding: 3px 0 0 3px; white-space: nowrap; z-index: 4; letter-spacing: -0.3px; }
.more { font-size: 14px; font-weight: bold; line-height: 20px; margin-left: auto; }
.toolbar .more { margin-right: 5px; }

.main { display: flex; height: 470px; flex: none; }
.sidebar { width: 52px; border-right: 1px solid #b4b4b4; background: linear-gradient(90deg, #fcfcfc, #ececec); padding-top: 5px; }
.hgrip { display: block; width: 17px; height: 6px; margin-left: 19px; background: radial-gradient(circle at 1px 1px, #c4c4c4 .7px, transparent 1px) 0 0 / 3px 3px; }
.sidebar div { height: 32.100px; display: flex; align-items: center; padding-left: 8px; }
.sidebar svg { width: 24px; height: 24px; }
.sidebar .arrow { margin: 1px 0 0 4px; }
.layers { width: 198px; display: flex; flex-direction: column; }
.dockhead { height: 22px; display: flex; align-items: center; gap: 3px; font-size: 14px; line-height: 20px; padding-left: 4px; flex: none; }
.dockhead span { flex: 1; white-space: nowrap; letter-spacing: -0.1px; }
.dockhead svg { width: 11px; height: 11px; margin-top: -3px; }
.layers .dockhead { padding-right: 2px; }
.styling .dockhead svg { position: relative; left: 1px; }
.ltools { height: 28px; flex: none; display: flex; align-items: center; padding: 0 4px 3px; }
.lt { width: 25px; height: 24px; display: flex; align-items: center; justify-content: center; flex: none; }
.lt.on { width: 24px; height: 23px; background: #ddd; border: 1px solid #aaa; border-radius: 3px; margin-right: 1px; }
.lt svg { width: 17px; height: 17px; }
.tree { height: 395px; flex: none; background: #fff; border: 1px solid #adadad; border-top-color: #c4c4c4; }
.node { height: 18px; display: flex; align-items: center; padding-left: 23px; font-weight: bold; }
.node.sel { background: #efefef; }
.node u { text-underline-offset: 1px; }
.check { width: 14px; height: 14px; background: #fff; border: 1px solid #aaa; flex: none; display: block; }
.check svg { width: 12px; height: 12px; }
.sym { width: 14px; height: 14px; margin: 0 7px; color: #7ba0c5; }
.swatch { width: 16px; height: 16px; background: #631522; border: 1px solid #40101a; margin: 0 6px; flex: none; }
.nm { letter-spacing: -0.1px; }
.node.sel .nm { letter-spacing: 0.1px; }
.tclock { margin-left: auto; width: 17px; height: 17px; border: 1px solid #ccc; margin-right: 4px; padding: 1px; }
.tclock svg { width: 13px; height: 13px; }
.tabs { display: flex; align-items: flex-start; margin-top: 1px; border-top: 1px solid #adadad; }
.tab { width: 63px; height: 21px; background: #dedede; border: 1px solid #b4b4b4; border-top: 0; text-align: center; line-height: 20px; border-radius: 0 0 3px 3px; }
.tab.cur { width: 56px; height: 23px; background: #fbfbfb; line-height: 22px; }
.split { display: flex; align-items: center; justify-content: center; }
.split i { width: 2px; height: 17px; background: radial-gradient(circle at 1px 1px, #b0b0b0 .7px, transparent 1px) 0 0 / 3px 3px; }
.s1 { width: 6px; } .s2 { width: 9px; padding-right: 3px; }
.map { width: 354px; height: 470px; border: 1px solid #aaa; border-top: 0; }

.styling { width: 430px; padding-right: 3px; display: flex; flex-direction: column; }
.styling .dockhead { padding-left: 1px; }
.combo, .btn { border: 1px solid #a8a8a8; border-radius: 3px; background: linear-gradient(#fff, #ececec); display: flex; align-items: center; }
.combo span { flex: 1; padding-left: 3px; white-space: nowrap; }
.combo .arrow { margin-right: 5px; }
.c-layer { height: 24px; flex: none; }
.c-layer .sym { margin: 0 3px 0 6px; }
.c-layer span { padding: 1px 0 0; font-size: 11px; letter-spacing: -0.2px; }
.sym.gray { color: #888; }
.sbody { display: flex; margin-top: 6px; height: 416px; }
.stabs { width: 38px; margin-right: 3px; flex: none; }
.stab.top { height: 32px; padding: 5px 0 0 7px; }
.stabs svg { width: 22px; height: 22px; }
.stabdark { height: 383px; background: #5c5c5c; padding: 5px 0 0 4px; display: flex; flex-direction: column; gap: 10px; }
.form { width: 386px; flex: none; }
.c-heat { height: 24px; }
.c-heat span { padding-top: 1px; }
.hot { width: 14px; height: 14px; margin: 0 0 0 6px; }
.row { display: flex; align-items: center; }
.row label { width: 90px; white-space: nowrap; margin-left: -1px; flex: none; padding-top: 1px; }
.r1 { height: 22px; margin-top: 6px; }
.r2 { height: 22px; margin-top: 6px; }
.r3 { height: 21px; margin-top: 6px; }
.r4 { height: 24px; margin-top: 7px; }
.r5 { height: 30px; margin-top: 1px; }
.ramp { width: 284px; height: 22px; border: 1px solid #a8a8a8; border-radius: 3px; background: #fafafa; padding: 2px 4px; }
.ramp i { display: block; height: 16px; background: linear-gradient(90deg, #440154, #482878 12%, #3e4989 25%, #31688e 38%, #26828e 48%, #1f9e89 57%, #35b779 69%, #6ece58 79%, #b5de2b 90%, #fde725); }
.row label + div { margin-left: 1px; }
.rampbtn { width: 12px; height: 22px; justify-content: center; }
.spin, .edit, .field { background: #fff; border: 1px solid #a8a8a8; border-radius: 3px; display: flex; align-items: center; height: 20px; }
.spin span { flex: 1; padding: 1px 0 0 4px; white-space: nowrap; letter-spacing: 0; }
.clear { width: 13px; height: 10px; margin-right: 11px; }
.ud { width: 14px; align-self: stretch; border-left: 1px solid #b4b4b4; background: #f6f6f6; display: flex; flex-direction: column; align-items: center; justify-content: center; gap: 3px; }
.ud::before { content: ""; width: 8px; height: 4px; background: #555; clip-path: polygon(50% 0, 100% 100%, 0 100%); }
.ud::after { content: ""; width: 8px; height: 4px; background: #555; clip-path: polygon(0 0, 100% 0, 50% 100%); }
.ud.low::after { background: #aaa; }
.w212 { width: 212px; } .w296 { width: 296px; } .w100 { width: 100px; }
.w296 span { letter-spacing: -0.25px; }
.mm { width: 78px; height: 22px; margin-left: 6px; letter-spacing: -0.4px; }
.edit { width: 266px; height: 24px; justify-content: flex-end; }
.dd { width: 20px; align-self: stretch; border-left: 1px solid #b4b4b4; display: flex; align-items: center; justify-content: center; background: #f8f8f8; }
.eps { width: 24px; height: 24px; margin-left: 6px; justify-content: center; font: bold 19px/20px "Liberation Serif", serif; color: #7a4478; }
.best { width: 30px; }
.fast { margin-left: 6px; }
.slider { height: 5px; border: 1px solid #a8a8a8; border-radius: 3px; background: #d4d4d4; position: relative; flex: none; }
.slider .fill { position: absolute; left: -1px; top: -1px; height: 5px; border: 1px solid #2d7ac8; background: #58a9f5; border-radius: 3px; }
.slider .knob { position: absolute; top: -5px; width: 13px; height: 13px; border: 1px solid #a8a8a8; border-radius: 3px; background: #fff; }
.quality { width: 223px; margin-top: -10px; }
.quality .fill { width: 110px; } .quality .knob { left: 104px; }
.ticks { position: absolute; top: 9px; left: 5px; width: 211px; display: flex; justify-content: space-between; }
.ticks i { width: 1px; height: 4px; background: #aaa; }
.ghead { height: 20px; margin-top: 53px; display: flex; align-items: center; gap: 7px; padding-left: 3px; font-weight: bold; font-size: 11.500px; letter-spacing: -0.1px; }
.ghead i { width: 11px; height: 8px; background: #333; clip-path: polygon(0 0, 100% 0, 50% 100%); }
.group { margin: 0 0 0 1px; height: 146px; border: 1px solid #d2d2d2; border-radius: 2px; background: #ededed; padding: 11px 5px 0 1px; }
.grow { display: flex; align-items: center; }
.grow label { width: 130px; flex: none; }
.g1 { height: 20px; }
.g1 label { margin-left: -1px; }
.opac { width: 142px; margin-right: 4px; margin-left: 2px; margin-top: -2px; }
.opac .fill { width: 98px; } .opac .knob { left: 96px; }
.g1 .clear { margin-right: 10px; }
.g2 { height: 43px; } .g2 label { padding-top: 6px; margin-left: -1px; width: 131px; }
.bl { width: 123px; margin-right: 1px; } .bl + .bl { margin-right: 0; }
.bl > span { display: block; margin-top: 5px; }
.bl .combo { height: 22px; margin-top: 1px; }
.g3 { height: 22px; margin-top: 7px; } .g4 { height: 22px; margin-top: 7px; }
.grow .check { margin-right: 4px; border-color: #b8b8b8; }
.sq { width: 24px; height: 23px; margin-left: auto; justify-content: center; }
.sq svg { width: 16px; height: 16px; opacity: .35; }
.actions { display: flex; align-items: center; margin-top: 4px; height: 24px; }
.act { width: 24px; height: 24px; margin-right: 6px; justify-content: center; }
.act svg { width: 15px; height: 15px; }
.orange { color: #e5762e; } .green { color: #74ad84; }
.actions .check { margin: 0 4px 0 159px; }
.apply { width: 80px; height: 21px; margin-left: auto; justify-content: center; letter-spacing: 0; }

.status { height: 27px; display: flex; align-items: center; padding: 3px 0 1px 4px; flex: none; white-space: nowrap; }
.status > * { flex: none; }
.locate { width: 200px; height: 22px; border: 1px solid #a8a8a8; border-radius: 3px; background: #fff; display: flex; align-items: center; color: #777; }
.locate svg { width: 13px; height: 13px; margin: 0 6px 0 8px; }
.locate span { letter-spacing: -0.05px; }
.coord { width: 43px; margin: 0 2px 0 42px; letter-spacing: -0.4px; }
.status .field, .status .spin { height: 22px; letter-spacing: 0; }
.f1 { width: 109px; padding-left: 6px; }
.bug { width: 16px; height: 17px; margin: 0 12px 0 4px; }
.scale { width: 16px; margin-right: 2px; }
.f2 { width: 81px; padding-left: 3px; justify-content: space-between; }
.lock { width: 14px; height: 16px; margin: 0 7px 0 11px; }
.mag { width: 34px; margin-right: 3px; letter-spacing: -0.5px; }
.f3 { width: 88px; }
.rot { width: 33px; margin: 0 6px 0 9px; letter-spacing: -0.5px; }
.f4 { width: 84px; margin-right: 6px; }
.render { margin-left: 4px; width: 53px; }
.crs { width: 15px; height: 14px; margin-right: 4px; }
.crst { width: 87px; letter-spacing: -0.4px; }
.msg { width: 17px; height: 15px; }
.size { width: 12px; height: 12px; margin: 8px 0 0 auto; }

.glyph-a { font: 11px "Liberation Sans", sans-serif; fill: #555; }
.glyph-11 { font: bold 8px "Liberation Sans", sans-serif; fill: #555; letter-spacing: 0; }
.glyph-q { font: 17px "Liberation Serif", serif; fill: #fff; }
.glyph-i { font: italic bold 15px "Liberation Serif", serif; fill: #fff; }
.glyph-db { font: 11px "Open Sans", sans-serif; fill: #fff; letter-spacing: 0; }
.glyph-e { font: bold 17px "Liberation Serif", serif; fill: #7a4478; }
.glyph-abc { font: bold 8px "Open Sans", sans-serif; fill: #5b4a00; letter-spacing: 0; }
.glyph-mask { font: bold 12px "Open Sans", sans-serif; fill: #444; letter-spacing: 0; }
.glyph-az { font: bold 8px "Liberation Sans", sans-serif; fill: #555; }
```
